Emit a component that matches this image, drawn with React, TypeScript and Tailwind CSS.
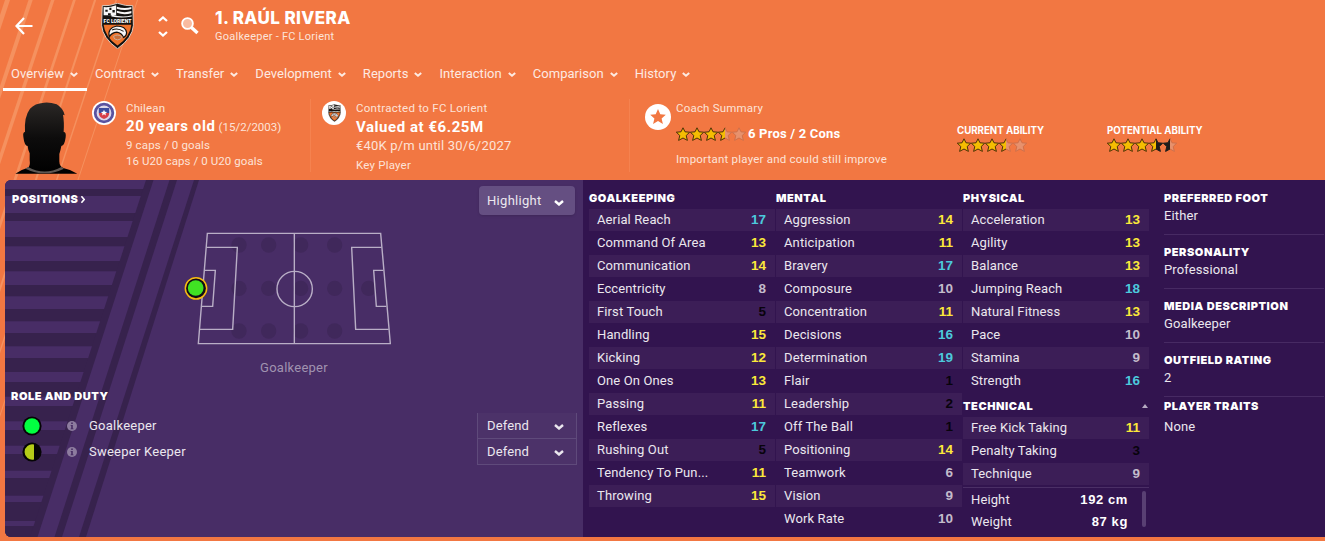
import React from 'react';

type Attr = [string, number];
type StarHalf = 'gold' | 'black' | 'empty';

const tabs = ['Overview', 'Contract', 'Transfer', 'Development', 'Reports', 'Interaction', 'Comparison', 'History'];

const goalkeeping: Attr[] = [
  ['Aerial Reach', 17],
  ['Command Of Area', 13],
  ['Communication', 14],
  ['Eccentricity', 8],
  ['First Touch', 5],
  ['Handling', 15],
  ['Kicking', 12],
  ['One On Ones', 13],
  ['Passing', 11],
  ['Reflexes', 17],
  ['Rushing Out', 5],
  ['Tendency To Pun...', 11],
  ['Throwing', 15],
];

const mental: Attr[] = [
  ['Aggression', 14],
  ['Anticipation', 11],
  ['Bravery', 17],
  ['Composure', 10],
  ['Concentration', 11],
  ['Decisions', 16],
  ['Determination', 19],
  ['Flair', 1],
  ['Leadership', 2],
  ['Off The Ball', 1],
  ['Positioning', 14],
  ['Teamwork', 6],
  ['Vision', 9],
  ['Work Rate', 10],
];

const physical: Attr[] = [
  ['Acceleration', 13],
  ['Agility', 13],
  ['Balance', 13],
  ['Jumping Reach', 18],
  ['Natural Fitness', 13],
  ['Pace', 10],
  ['Stamina', 9],
  ['Strength', 16],
];

const technical: Attr[] = [
  ['Free Kick Taking', 11],
  ['Penalty Taking', 3],
  ['Technique', 9],
];

const info = [
  { label: 'PREFERRED FOOT', value: 'Either' },
  { label: 'PERSONALITY', value: 'Professional' },
  { label: 'MEDIA DESCRIPTION', value: 'Goalkeeper' },
  { label: 'OUTFIELD RATING', value: '2' },
];

const valueColor = (v: number) => {
  if (v >= 16) return 'text-[#4cc9dc]';
  if (v >= 11) return 'text-[#fbe83a]';
  if (v >= 6) return 'text-[#c4bccb]';
  return 'text-[#08030c]';
};

const starFill: Record<StarHalf, string> = { gold: '#f5bd02', black: '#1f1d1b', empty: '#e7916d' };
const starStroke: Record<StarHalf, string> = { gold: '#4a3009', black: '#1f1d1b', empty: '#cf6f49' };

function Chevron({ className = '', stroke = 2 }: { className?: string; stroke?: number }) {
  return (
    <svg viewBox="0 0 10 6" className={className} fill="none" stroke="currentColor" strokeWidth={stroke}>
      <path d="M1 1 L5 4.5 L9 1" />
    </svg>
  );
}

function Stars({ halves }: { halves: StarHalf[] }) {
  return (
    <svg viewBox="0 0 70 14" className="h-[14px] w-[70px] shrink-0">
      {halves.map((half, i) => {
        const x = Math.floor(i / 2) * 14;
        const d =
          i % 2 === 0
            ? 'M7 .8 L5 4.8 .3 5.2 3.8 8.5 2.6 13.4 7 11'
            : 'M7 .8 L9 4.8 13.7 5.2 10.2 8.5 11.4 13.4 7 11';
        return (
          <path
            key={i}
            d={d}
            transform={`translate(${x} 0)`}
            fill={starFill[half]}
            stroke={starStroke[half]}
            strokeWidth="1"
          />
        );
      })}
    </svg>
  );
}

function Crest({ className }: { className: string }) {
  return (
    <svg viewBox="0 0 96 136" className={className}>
      <path d="M3 8 Q22 10 48 1 Q74 10 93 8 L95 66 Q92 104 48 135 Q4 104 1 66 Z" fill="#141210" stroke="#e9e0d8" strokeWidth="2.5" />
      <path d="M7 12 Q24 14 44 7 L44 36 L7 36 Z" fill="#f7f7f7" />
      <path d="M12 20 h7 v6 h-7z M24 14 h6 v7 h-6z M33 21 h7 v7 h-7z M20 30 h8 v6 h-8z" fill="#141210" />
      <path d="M46 11 Q68 18 89 12 V18 Q68 24 46 17 Z M46 23 Q68 31 89 24 V30 Q68 37 46 29 Z M30 34 Q62 44 90 36 V40 Q60 46 30 40 Z" fill="#f7f7f7" />
      <text x="48" y="59" textAnchor="middle" fontSize="15" fontWeight="900" letterSpacing="0" fill="#fff">
        FC LORIENT
      </text>
      <path d="M7 64 H89 Q86 98 48 126 Q10 98 7 64 Z" fill="#f0742c" />
      <path d="M24 100 Q17 74 46 68 Q72 68 75 88 Q75 97 66 102 Q60 88 46 86 Q30 88 24 100 Z" fill="#f7f7f7" stroke="#141210" strokeWidth="3.5" />
      <path d="M32 80 Q48 72 66 84" fill="none" stroke="#141210" strokeWidth="3" />
      <path d="M36 99 Q48 90 62 100 Q58 109 48 109 Q38 109 36 99 Z" fill="#c8703c" stroke="#c9b5a8" strokeWidth="2.5" />
    </svg>
  );
}

function Silhouette() {
  return (
    <svg viewBox="42 33 192 222" className="h-[74px] w-16">
      <defs>
        <linearGradient id="head" x1="0" y1="0" x2="0" y2="1">
          <stop offset="0" stopColor="#2b2826" />
          <stop offset=".5" stopColor="#0d0c0c" />
          <stop offset="1" stopColor="#000" />
        </linearGradient>
      </defs>
      <path
        d="M46 251 Q60 240 82 234 Q92 230 89 210 V190 Q84 180 83 168 Q73 167 70 140 Q68 126 75 126 Q72 80 90 56 Q104 40 132 38 Q150 36 170 43 Q190 55 194 76 L189 74 Q193 95 191 126 Q199 126 197 142 Q194 167 184 168 Q182 180 178 192 V214 Q178 230 192 235 Q216 240 232 251 Z"
        fill="url(#head)"
      />
      <path d="M84 231 Q134 258 184 231 L192 236 Q134 264 76 236 Z" fill="#5d5753" />
    </svg>
  );
}

function ChileBadge() {
  return (
    <svg viewBox="0 0 24 24" className="size-6 shrink-0">
      <circle cx="12" cy="12" r="12" fill="#fff" />
      <circle cx="12" cy="12" r="8.8" fill="#dcd8ea" stroke="#5a53a0" strokeWidth="2.8" />
      <path d="M6.8 7 H17.2 V12 H6.8 Z" fill="#3d4c9e" />
      <path d="M6.8 12 H17.2 Q17.2 16.5 12 18 Q6.8 16.5 6.8 12 Z" fill="#d8404a" />
      <path d="M12 8.8 l.9 2 2.200.2 -1.700 1.400 .6 2.100 -2-1.200 -2 1.200 .6-2.100 -1.700-1.400 2.200-.2z" fill="#fff" />
    </svg>
  );
}

function Pitch() {
  const rows: [number, number[]][] = [
    [75, [177, 266, 362, 464]],
    [205, [177, 266, 362, 464, 566]],
    [333, [177, 266, 362, 464]],
  ];
  return (
    <svg viewBox="0 0 690 405" className="h-[135px] w-[230px]">
      {rows.map(([y, xs]) => xs.map((x) => <circle key={`${x}-${y}`} cx={x} cy={y} r="23" fill="#40285b" />))}
      <g fill="none" stroke="#b9aec6" strokeWidth="4.2">
        <path d="M82 40 H602 L631 371 H55 Z" />
        <path d="M343 40 V370" />
        <circle cx="344" cy="207" r="53" />
        <path d="M79 82 H172 L158 328 H59" />
        <path d="M73 151 H106 L98 259 H64" />
        <path d="M605 82 H515 L527 328 H626" />
        <path d="M610 151 H581 L589 259 H619" />
      </g>
      <circle cx="48" cy="205" r="32" fill="#120c14" stroke="#f7bb12" strokeWidth="4.5" />
      <circle cx="47" cy="204" r="23.5" fill="#40e223" />
    </svg>
  );
}

function PanelStripes() {
  const bars = [
    [9, 7], [33, 8], [57, 9.3], [81, 10.3], [105, 11.3], [129, 12.3], [153, 13.3], [178, 14],
    [202, 14.7], [226, 15.3], [250, 15.7], [274, 16.7], [298, 17.7], [322, 19], [346, 12],
  ];
  return (
    <svg viewBox="0 0 578 357" className="absolute inset-0 h-full w-full">
      <clipPath id="bars">
        <path d="M0 0 H143 L28 357 H0 Z" />
      </clipPath>
      <g fill="#37224d">
        <g clipPath="url(#bars)">
          {bars.map(([y, h]) => (
            <rect key={y} x="0" y={y} width="150" height={h} />
          ))}
        </g>
        <path d="M141 0 H148.500 L32.500 357 H25 Z" />
        <path d="M164.500 0 H172 L57 357 H49.500 Z" />
        <path d="M189 0 H194 L81 357 H74 Z" />
      </g>
    </svg>
  );
}

function Heading({ children }: { children: React.ReactNode }) {
  return (
    <h2 className="font-['Inter'] text-[11px] leading-4 font-black tracking-[0.55px] whitespace-nowrap text-white">
      {children}
    </h2>
  );
}

function AttrRows({ rows }: { rows: Attr[] }) {
  return (
    <div>
      {rows.map(([name, value], i) => (
        <div
          key={name}
          className={`mt-px flex h-[22px] items-center justify-between pr-[9px] pl-2 ${i % 2 === 0 ? 'bg-[#3c1e57]' : ''}`}
        >
          <span>{name}</span>
          <span className={`font-['Liberation_Sans'] text-[13.5px] font-bold tracking-normal ${valueColor(value)}`}>
            {value}
          </span>
        </div>
      ))}
    </div>
  );
}

function RoleRow({ name, half }: { name: string; half?: boolean }) {
  return (
    <div className="flex h-[26px] items-center">
      <svg viewBox="0 0 20 20" className="ml-[17px] size-5">
        <circle cx="10" cy="10" r="9.600" fill="#050505" />
        {half ? <path d="M12 2.500 V17.500 A7.700 7.700 0 1 1 12 2.500 Z" fill="#b5cc18" /> : <circle cx="10" cy="10" r="7.700" fill="#02ff41" />}
      </svg>
      <svg viewBox="0 0 10 10" className="ml-[25px] size-2.5">
        <circle cx="5" cy="5" r="5" fill="#8d7c9f" />
        <path d="M4.200 1.600 H5.800 V3 H4.200 Z M3.600 4 H5.800 V7.400 H6.500 V8.200 H3.600 V7.400 H4.200 V4.800 H3.600 Z" fill="#472c63" />
      </svg>
      <span className="ml-3 tracking-[0.24px]">{name}</span>
      <div className="mr-1.5 ml-auto flex h-full w-[100px] items-center justify-between border-x border-b border-[#5f4a7b] bg-[#4c3269] pr-3 pl-[9px]">
        <span>Defend</span>
        <Chevron className="mt-0.5 h-1.5 w-2.5" stroke={2.4} />
      </div>
    </div>
  );
}

export default function App() {
  return (
    <div className="relative h-[541px] w-[1325px] overflow-hidden bg-[#f27742] font-['Roboto',sans-serif] text-[13px] leading-4 tracking-[0.12px] text-[#ebe7ee]">
      <svg viewBox="0 0 150 541" className="absolute top-0 left-0 h-[541px] w-[150px]" fill="#f5915f">
        <path d="M5 0 H10 L-170 541 H-175 Z" />
        <path d="M28.500 0 H32.700 L-147 541 H-151 Z" />
        <path d="M51 0 H54.500 L-125 541 H-129 Z" />
        <path d="M73 0 H75.800 L-103 541 H-106 Z" />
        <path d="M94 0 H96.200 L-82 541 H-84 Z" />
        <path d="M115.500 0 H117 L-62 541 H-63.500 Z" />
        <path d="M137 0 H138 L-41 541 H-42 Z" />
      </svg>

      <div className="relative flex h-full flex-col">
        {/* Title bar */}
        <header className="flex h-[58px] items-start text-white">
          <svg viewBox="0 0 18 18" className="mt-[17px] ml-[15px] h-[18px] w-[18px]" fill="none" stroke="currentColor" strokeWidth="2.200">
            <path d="M17.500 9 H1.500 M9 1 L1.500 9 L9 17" />
          </svg>
          <Crest className="mt-[3px] ml-[68px] h-[46px] w-[33px]" />
          <div className="mt-4 ml-6 flex flex-col gap-[9px]">
            <Chevron className="h-1.5 w-2.5 rotate-180" stroke={2.3} />
            <Chevron className="h-1.5 w-2.5" stroke={2.3} />
          </div>
          <svg viewBox="0 0 18 18" className="mt-[17px] ml-[13px] size-[18px]">
            <path d="M10.500 10.500 L16.500 16" stroke="#fff" strokeWidth="3.400" />
            <circle cx="6.500" cy="6.500" r="5.400" fill="#f9bba0" stroke="#fff" strokeWidth="1.800" />
          </svg>
          <div className="mt-2 ml-4">
            <h1 className="font-['Inter'] text-[17px] leading-5 font-extrabold tracking-[0.4px]">1. RAÚL RIVERA</h1>
            <p className="mt-px text-[11px] leading-4 tracking-[0.24px] text-[#fce4da]">Goalkeeper - FC Lorient</p>
          </div>
        </header>

        {/* Tabs */}
        <nav className="flex h-[33px] gap-[17px] pl-[11px] tracking-[0.04px] text-[#fdeae2]">
          {tabs.map((tab, i) => (
            <div key={tab} className="relative flex h-full items-start gap-1.5 pt-2">
              <span className="leading-4">{tab}</span>
              <Chevron className="mt-1.5 h-[5px] w-2" stroke={2.500} />
              {i === 0 && <div className="absolute -right-[9px] bottom-0 -left-2 h-[3px] bg-white" />}
            </div>
          ))}
        </nav>

        {/* Player summary */}
        <section className="flex h-[89px] text-[11.500px] tracking-[0.15px] text-[#fde3d8]">
          <div className="pt-2.5 pl-3.5">
            <Silhouette />
          </div>
          <div className="my-2 ml-3.5 flex w-[219px] border-r border-[#f5824f]">
            <div className="mt-0.5">
              <ChileBadge />
            </div>
            <div className="ml-2.5">
              <p className="mt-px leading-4">Chilean</p>
              <p className="mt-0.5 leading-4 whitespace-nowrap">
                <b className="text-[15px] tracking-[0.6px] text-white">20 years old</b>{' '}
                <span className="tracking-normal">(15/2/2003)</span>
              </p>
              <p className="mt-0.5 leading-4">9 caps / 0 goals</p>
              <p className="tracking-[0.08px] leading-4">16 U20 caps / 0 U20 goals</p>
            </div>
          </div>
          <div className="my-2 ml-[11px] flex w-[308px] border-r border-[#f5824f]">
            <div className="mt-0.5 flex size-6 items-center justify-center rounded-full bg-white">
              <Crest className="h-[18px] w-[13px]" />
            </div>
            <div className="ml-2.5">
              <p className="mt-px leading-4 tracking-[0.28px]">Contracted to FC Lorient</p>
              <p className="mt-[3px] text-[15px] leading-4 font-bold tracking-[0.55px] text-white">Valued at €6.25M</p>
              <p className="mt-[3px] text-[13px] leading-4 tracking-[0.2px]">€40K p/m until 30/6/2027</p>
              <p className="mt-[3px] leading-4 tracking-[0.2px]">Key Player</p>
            </div>
          </div>
          <div className="ml-[15px] flex w-[312px] pt-[9px]">
            <svg viewBox="0 0 26 26" className="mt-1 size-[26px]">
              <circle cx="13" cy="13" r="13" fill="#fff" />
              <path d="M13 5 l2.300 5.200 5.500.5 -4.200 3.700 1.300 5.600 -4.900-3 -4.900 3 1.300-5.600 -4.200-3.700 5.500-.5z" fill="#f27742" />
            </svg>
            <div className="ml-[5px]">
              <p className="leading-4 tracking-[0.2px]">Coach Summary</p>
              <div className="mt-[10px] flex h-4 items-center gap-0.5">
                <Stars halves={['gold', 'gold', 'gold', 'gold', 'gold', 'gold', 'gold', 'empty', 'empty', 'empty']} />
                <b className="text-[13px] tracking-[0.2px] whitespace-nowrap text-white">6 Pros / 2 Cons</b>
              </div>
              <p className="mt-[9px] leading-4 tracking-[0.22px] whitespace-nowrap">
                Important player and could still improve
              </p>
            </div>
          </div>
          <div className="w-[150px] pt-8 font-['Inter'] text-[9.700px] font-bold tracking-normal text-white">
            <p className="leading-[15px]">CURRENT ABILITY</p>
            <Stars halves={['gold', 'gold', 'gold', 'gold', 'gold', 'gold', 'gold', 'empty', 'empty', 'empty']} />
          </div>
          <div className="pt-8 font-['Inter'] text-[9.700px] font-bold tracking-normal text-white">
            <p className="leading-[15px]">POTENTIAL ABILITY</p>
            <Stars halves={['gold', 'gold', 'gold', 'gold', 'gold', 'gold', 'gold', 'black', 'black', 'empty']} />
          </div>
        </section>

        {/* Main panel */}
        <main className="ml-[5px] flex h-[357px] overflow-hidden rounded-l-md bg-[#32144f]">
          <section className="relative w-[578px] bg-[#482d66]">
            <PanelStripes />
            <div className="relative flex flex-col">
              <div className="flex h-10 items-start justify-between pr-2 pl-[7px]">
                <div className="mt-[11px] flex items-center gap-1">
                  <Heading>POSITIONS</Heading>
                  <Chevron className="-ml-[3px] h-[5px] w-2 -rotate-90 text-white" />
                </div>
                <div className="mt-1.5 flex h-[29px] w-24 items-center justify-between rounded bg-[#654f82] pr-[11px] pl-2 shadow-sm">
                  <span className="tracking-[0.3px]">Highlight</span>
                  <Chevron className="mt-1 h-1.5 w-2.5 text-white" stroke={2.400} />
                </div>
              </div>
              <div className="ml-[175px] w-[230px]">
                <Pitch />
                <p className="h-6 pt-[5px] pr-0.5 text-center tracking-[0.25px] text-[#a093b0]">Goalkeeper</p>
              </div>
              <div className="mt-[9px] ml-1.5 h-[25px]">
                <Heading>ROLE AND DUTY</Heading>
              </div>
              <RoleRow name="Goalkeeper" />
              <RoleRow name="Sweeper Keeper" half />
            </div>
          </section>

          <section className="ml-1.5 grid grid-cols-[186px_186px_186px] gap-px pt-2.5">
            <div>
              <Heading>GOALKEEPING</Heading>
              <div className="mt-[3px]">
                <AttrRows rows={goalkeeping} />
              </div>
            </div>
            <div>
              <Heading>MENTAL</Heading>
              <div className="mt-[3px]">
                <AttrRows rows={mental} />
              </div>
            </div>
            <div>
              <Heading>PHYSICAL</Heading>
              <div className="mt-[3px]">
                <AttrRows rows={physical} />
              </div>
              <div className="mt-[6px] flex items-center justify-between pr-px">
                <Heading>TECHNICAL</Heading>
                <div className="h-0 w-0 border-x-[3.5px] border-b-4 border-x-transparent border-b-[#b6aac2]" />
              </div>
              <div className="mt-[3px]">
                <AttrRows rows={technical} />
              </div>
              <div className="mt-[2px] flex border-t border-[#4b2f66] pl-2">
                <div className="flex-1 pt-px">
                  <div className="flex h-[22px] items-center justify-between">
                    <span>Height</span>
                    <b className="font-['Liberation_Sans'] text-[13px] tracking-[0.6px] text-white">192 cm</b>
                  </div>
                  <div className="flex h-[22px] items-center justify-between">
                    <span>Weight</span>
                    <b className="font-['Liberation_Sans'] text-[13px] tracking-[0.6px] text-white">87 kg</b>
                  </div>
                </div>
                <div className="mt-[3px] mr-[3px] ml-3.5 h-9 w-1 rounded-full bg-[#594073]" />
              </div>
            </div>
          </section>

          <section className="ml-[15px] w-[160px] pt-2.5">
            {info.map((item, i) => (
              <div key={item.label} className={`border-b border-[#472a63] ${i === 0 ? 'h-[45px]' : 'h-[54px] pt-[9px]'}`}>
                <Heading>{item.label}</Heading>
                <p className="mt-0.5">{item.value}</p>
              </div>
            ))}
            <div className="pt-px">
              <Heading>PLAYER TRAITS</Heading>
              <p className="mt-[5px]">None</p>
            </div>
          </section>
        </main>
      </div>
    </div>
  );
}
